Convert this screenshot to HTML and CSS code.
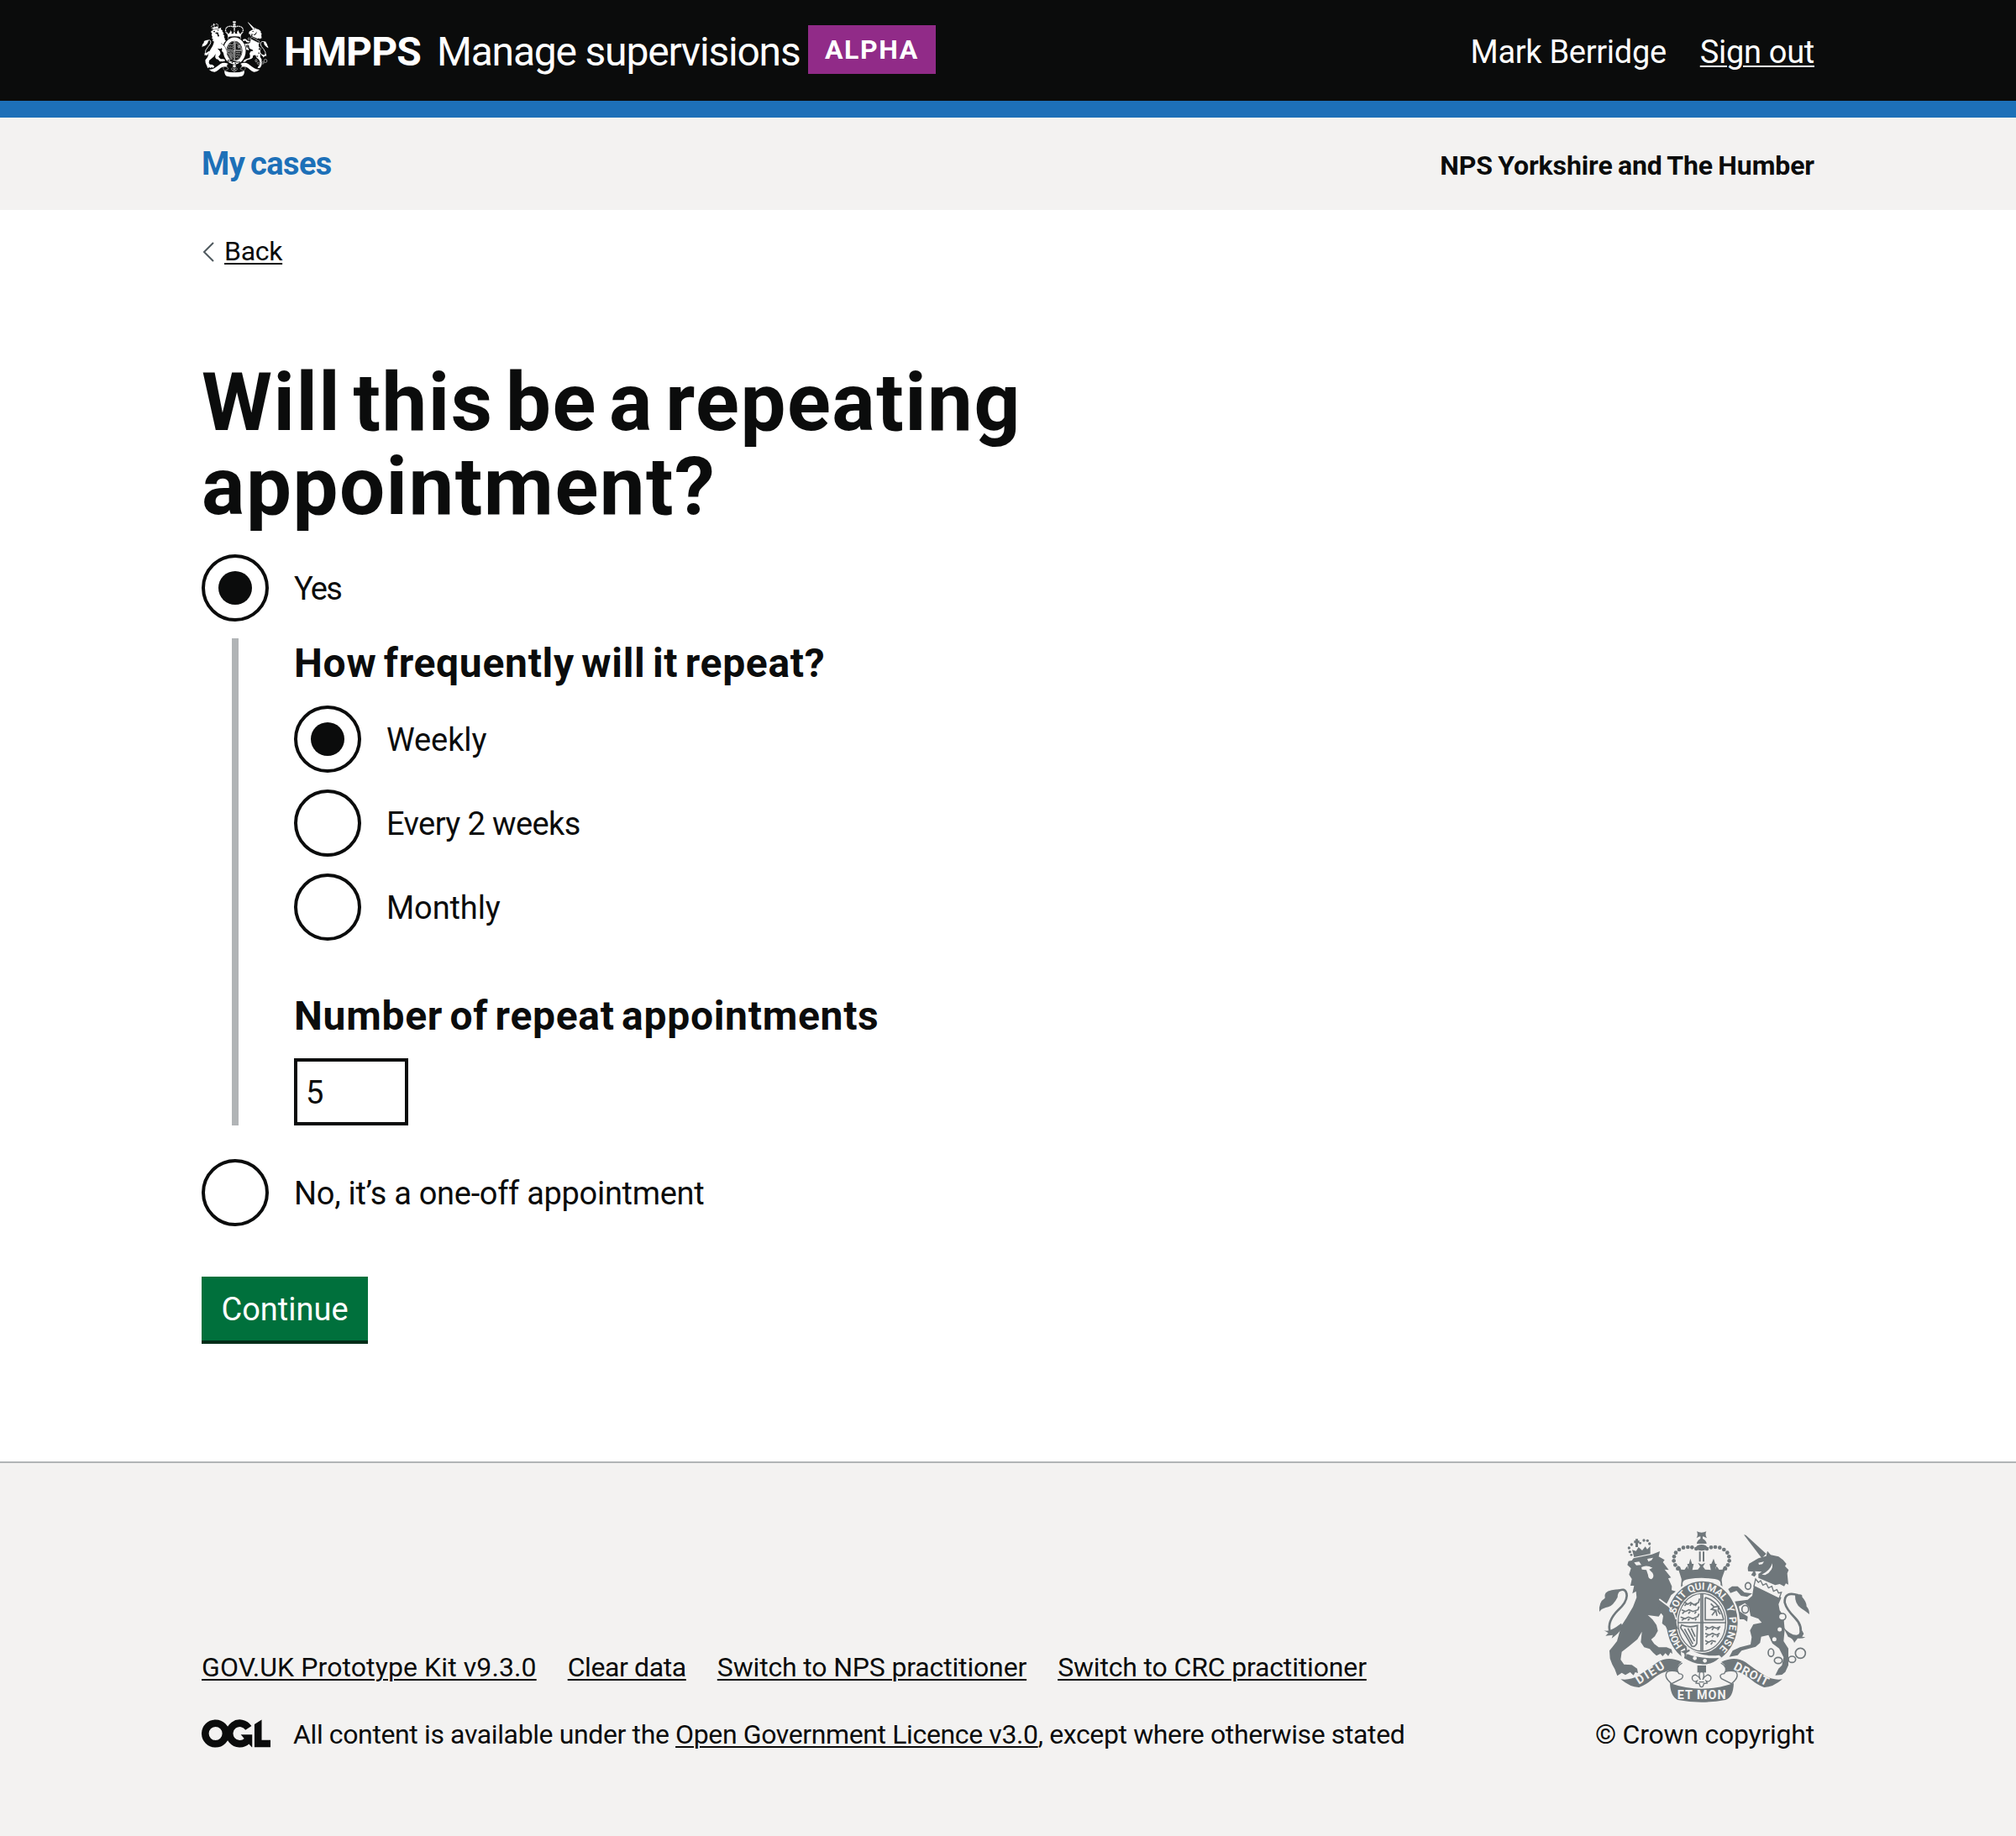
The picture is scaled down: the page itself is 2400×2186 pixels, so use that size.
FILE: index.html
```html
<!DOCTYPE html>
<html lang="en">
<head>
<meta charset="utf-8">
<title>Will this be a repeating appointment? – Manage supervisions</title>
<link rel="stylesheet" href="styles.css">
</head>
<body>
<svg class="defs" aria-hidden="true">
  <symbol id="crest" viewBox="66 60 762 624" preserveAspectRatio="none">
    <!-- lion -->
    <g class="ink">
      <path d="M189 136L196 162L254 150L254 122L243 134L236 124L225 138L212 126L203 140Z"/>
      <path d="M201 97h9v6h5v9h-5v14h-9v-14h-5v-9h5z"/>
      <circle cx="178" cy="129" r="5"/><circle cx="181" cy="143" r="5"/><circle cx="187" cy="117" r="5"/><circle cx="186" cy="154" r="4"/>
      <circle cx="218" cy="112" r="4"/><circle cx="231" cy="102" r="5"/><circle cx="244" cy="103" r="5"/><circle cx="251" cy="114" r="5"/>
      <path d="M194 166L260 152L288 141L284 160L305 172L299 180L320 208L305 206L328 235L318 238L331 266L330 280L345 284L328 298L318 318L310 332L325 345L340 370L347 396L352 418L340 412L335 424L326 412L318 424L310 410L298 400L302 386L300 366L292 362L284 374L245 369L262 385L276 404L281 425L270 445L257 456L268 472L284 484L312 484L330 491L333 508L326 502L318 515L308 505L298 516L290 507L276 514L264 503L252 490L232 484L220 466L224 428L208 455L178 480L152 500L148 528L160 545L188 547L207 560L210 576L200 573L194 584L182 573L165 583L152 575L136 586L127 562L118 545L110 524L108 496L118 484L135 462L150 408L168 380L192 340L205 306L203 284L190 292L196 264L183 264L188 240L178 224L185 202L172 190L176 176L188 174Z"/>
      <path d="M72 357Q69 322 92 308Q86 286 116 280Q138 275 150 277Q136 292 137 305Q122 334 104 340Q84 345 78 350Z"/>
      <path d="M88 423Q108 432 150 398L156 412Q140 436 116 452L120 440L94 443L104 433Z"/>
    </g>
    <path class="line" stroke-width="8" d="M128 290Q168 262 170 300Q169 324 140 350Q98 392 110 428"/>
    <path class="paper" d="M196 181L214 178L222 190L204 191ZM243 168L264 164L258 173L247 178ZM222 198Q240 188 262 200L250 206L262 218Q270 232 258 241Q246 240 246 226L240 208L224 206Z"/>
    <!-- imperial crown -->
    <g class="ink">
      <path d="M420 70Q437 78 454 70Q448 82 456 94Q444 88 441 88L441 96Q455 104 455 114L420 114Q420 104 433 96L433 88Q428 88 419 94Q426 82 420 70Z"/>
      <ellipse cx="437" cy="128" rx="20" ry="11"/>
      <path d="M428 142h6v36h-6zM441 142h6v36h-6z"/>
      <circle cx="418" cy="132" r="7"/><circle cx="403" cy="127" r="7"/><circle cx="388" cy="126" r="7"/><circle cx="372" cy="128" r="7"/><circle cx="357" cy="135" r="7"/><circle cx="345" cy="146" r="7"/><circle cx="339" cy="160" r="7"/><circle cx="338" cy="175" r="7"/><circle cx="343" cy="190" r="7"/><circle cx="352" cy="203" r="7"/>
      <circle cx="456" cy="132" r="7"/><circle cx="471" cy="127" r="7"/><circle cx="486" cy="126" r="7"/><circle cx="502" cy="128" r="7"/><circle cx="517" cy="135" r="7"/><circle cx="529" cy="146" r="7"/><circle cx="535" cy="160" r="7"/><circle cx="536" cy="175" r="7"/><circle cx="531" cy="190" r="7"/><circle cx="522" cy="203" r="7"/>
      <path d="M350 192L360 196L364 206L376 207L385 194L391 206L386 186L392 186L397 167L403 186L409 186L404 208L424 206L432 196L424 182L437 188L450 182L442 196L450 206L470 208L466 186L472 186L480 167L486 186L491 186L486 206L491 194L500 207L512 206L516 196L526 192L508 242Q437 222 366 242Z"/>
      <path d="M366 236Q437 218 508 236L512 270Q437 232 363 270Z"/>
    </g>
    <path class="paper" d="M370 264Q364 243 392 240Q437 233 484 240Q510 243 504 264Q437 230 370 264Z"/>
    <!-- unicorn -->
    <g class="ink">
      <path d="M588 82L595 83L668 150L652 166Z"/>
      <path d="M607 185L640 166L668 158L672 140L684 154L712 160L728 172L740 186L735 194L748 208L743 220L747 260L738 256L732 266L716 258L700 262L640 236L640 222L652 214L628 212L632 224L626 232L614 226L622 214L603 212L602 200Z"/>
      <path d="M624 262L722 306L712 330L716 352L730 372L732 400L734 420L730 462L747 488L747 548L736 572L724 582L700 584L712 560L724 548L730 520L714 488L690 470L676 440L650 446L646 468L630 482L580 496L566 512L536 518L548 496L574 484L612 474L616 448L610 424L622 402L652 396L640 382L612 372L606 340L592 326L570 338L574 356L602 374L600 392L588 384L572 384L556 352L546 330L556 320L602 314L618 300Z"/>
      <path d="M532 276L546 266L566 266L590 288L618 292L600 304L578 300L562 282L540 290Z"/>
      <path d="M771 297Q800 290 796 304Q812 322 812 338Q822 348 822 366Q808 354 792 344Q770 330 771 297Z"/>
      <path d="M728 410Q752 440 776 440Q790 438 796 424L802 436L796 446L808 448Q796 454 780 452L768 468Q764 452 746 446Z"/>
    </g>
    <path class="line" stroke-width="8" d="M782 298Q732 282 734 324Q740 348 770 378Q802 410 786 446"/>
    <path class="paper" d="M640 182L660 178L654 187L642 189ZM690 184Q694 212 664 226L652 224Q680 212 690 184Z"/>
    <path class="paper edge" d="M630 240L640 252L648 246L656 262L668 256L676 272L688 266L694 284L706 278L712 290L722 288L714 310L624 266Z"/>
    <g class="chain">
      <ellipse cx="603" cy="265" rx="10" ry="12"/><ellipse cx="593" cy="348" rx="12" ry="14"/><ellipse cx="725" cy="375" rx="13" ry="12"/>
      <ellipse cx="716" cy="420" rx="10" ry="10"/><ellipse cx="697" cy="455" rx="10" ry="10"/>
      <ellipse cx="685" cy="503" rx="10" ry="14"/><ellipse cx="711" cy="531" rx="14" ry="11"/><ellipse cx="760" cy="527" rx="13" ry="11"/><circle cx="790" cy="505" r="18"/>
    </g>
    <!-- garter and shield -->
    <ellipse class="paper" cx="439" cy="396" rx="134" ry="154"/>
    <ellipse class="ink" cx="439" cy="396" rx="127" ry="148"/>
    <ellipse class="paper" cx="438" cy="395" rx="91" ry="109"/>
    <ellipse class="shield" cx="438" cy="395" rx="85" ry="103"/>
    <path class="line" stroke-width="5" d="M435 292v206M441 292v206M352 396h172"/>
    <g class="charge">
      <path d="M374 322l14 8l10-6l12 8l16-8l4-14M376 336l8-8M396 336l4-8M414 336l6-8M366 350l14 6l12-6l14 6l18-6l4-12M368 364l8-8M390 364l6-8M412 364l6-8M362 376l16 6l12-6l16 6l18-8l4-10M366 388l8-6M388 388l6-6M414 388l4-6"/>
      <path d="M450 410l14 6l12-6l14 6l14-6M452 422l8-8M474 422l6-8M494 422l6-8M450 434l14 6l12-6l14 6l12-6M452 448l8-8M474 448l6-8M492 448l6-8M450 460l12 6l12-6l14 4M452 474l8-8M470 474l6-8"/>
      <path d="M450 306v80h66M450 306q52 14 66 80M470 328l12 12l-10 8l16 4l-14 18M482 340l16-2l-2 16l8 12M488 352l4 20"/>
      <path d="M366 404q30 12 56 2l-2 64q-6 14-18 10q-24-44-40-66zM376 418l30 54M388 416l24 46M400 416l14 30"/>
    </g>
    <!-- lion's foreleg over the garter -->
    <path class="arm" d="M288 310L318 336Q342 362 346 398L354 420L342 416L334 428L326 414L316 424L308 408L296 398L300 372L284 350Z"/>
    <path class="hair" stroke-width="5" d="M286 312L318 336Q340 356 346 384"/>
    <path class="paper" d="M362 496L384 482L398 492Q440 520 500 512L508 520Q480 552 436 550Q396 548 366 524Z"/>
    <path class="ink" d="M386 508Q430 526 500 522Q474 548 436 544Q406 541 378 524Z"/>
    <path class="line" stroke-width="7" d="M368 482Q384 480 382 496L372 500Q384 504 378 524M394 494L376 504"/>
    <g class="paper"><circle cx="413" cy="523" r="7"/><circle cx="449" cy="532" r="7"/></g>
    <!-- pendant -->
    <path class="ink" d="M422 549h31v25h-31z"/>
    <path class="line" stroke-width="4" d="M437 564q-14 16-4 36q-8-14-18-18q-16 4-10 18q6 10 16 4l-4 8l12 2q2 12 8 12q6 0 8-12l12-2l-4-8q10 6 16-4q6-14-10-18q-10 4-18 18q10-20-4-36M428 608h18"/>
    <!-- motto scroll -->
    <g class="ink">
      <path d="M148 598Q180 603 210 586Q250 560 280 537Q318 514 366 536Q344 552 354 572Q326 564 306 572Q284 578 262 598Q236 620 214 627Q184 628 148 598Z"/>
      <path d="M726 598Q694 603 664 586Q624 560 594 537Q556 514 508 536Q530 552 520 572Q548 564 568 572Q590 578 612 598Q638 620 660 627Q690 628 726 598Z"/>
      <path d="M324 612Q437 652 552 612Q550 664 522 672Q437 688 352 672Q326 660 324 612Z"/>
    </g>
    <path class="paper edge" d="M368 540Q340 556 356 578Q378 580 366 596L330 614Q300 590 314 572Q330 564 354 572"/>
    <path class="paper edge" d="M506 540Q534 556 518 578Q496 580 508 596L544 614Q574 590 560 572Q544 564 520 572"/>
  </symbol>
  <path id="garter-hon" d="M370 479A97 118 0 0 1 343 411"/>
  <path id="garter-soit" d="M345 366A97 118 0 0 1 390 294"/>
  <path id="garter-qui" d="M394 292A97 118 0 0 1 519 329"/>
  <path id="garter-pense" d="M525 340A97 118 0 0 1 492 495"/>
</svg>

<header class="header">
  <a class="brand" href="#">
    <svg class="brand-crest" aria-hidden="true"><use href="#crest"/></svg>
    <span class="brand-org">HMPPS</span>
    <span class="brand-service">Manage supervisions</span>
  </a>
  <strong class="tag">ALPHA</strong>
  <div class="user"><span>Mark Berridge</span><a class="link" href="#">Sign out</a></div>
</header>
<nav class="nav"><a class="nav-link" href="#">My cases</a><span class="nav-team">NPS Yorkshire and The Humber</span></nav>

<main class="main">
  <a class="back" href="#">
    <svg class="back-arrow" viewBox="0 0 14 24" aria-hidden="true"><path d="M13 1L2 12L13 23"/></svg>
    <span class="link back-text">Back</span>
  </a>
  <h1 class="title">Will this be a repeating appointment?</h1>
  <form>
    <label class="radio"><span class="dot dot-on"></span><span class="label label-yes">Yes</span></label>
    <div class="conditional">
      <h2 class="subtitle">How frequently will it repeat?</h2>
      <div class="options">
        <label class="radio"><span class="dot dot-on"></span><span class="label">Weekly</span></label>
        <label class="radio"><span class="dot"></span><span class="label label-fortnight">Every 2 weeks</span></label>
        <label class="radio"><span class="dot"></span><span class="label">Monthly</span></label>
      </div>
      <h2 class="subtitle subtitle-count">Number of repeat appointments</h2>
      <input class="count" type="text" value="5">
    </div>
    <label class="radio"><span class="dot"></span><span class="label label-no">No, it’s a one-off appointment</span></label>
    <button class="button" type="button">Continue</button>
  </form>
</main>

<footer class="footer">
  <div class="footer-main">
    <div class="footer-links">
      <a class="link kit" href="#">GOV.UK Prototype Kit v9.3.0</a>
      <a class="link clear" href="#">Clear data</a>
      <a class="link switch" href="#">Switch to NPS practitioner</a>
      <a class="link switch" href="#">Switch to CRC practitioner</a>
    </div>
    <div class="licence">
      <svg class="ogl" viewBox="0 0 483.2 195.7" role="img" aria-label="OGL"><g><circle cx="97.8" cy="97.8" r="72.5"/><path d="M329 58.500A72.500 72.500 0 1 0 319 149.500"/></g><path class="ogl-solid" d="M421.500 142.800V.1l-50.700 32.300v161.100h112.400v-50.700zM275 105.700h80v87.800h-3l-53-60.300z"/></svg>
      <span>All content is available under the <a class="link" href="#">Open Government Licence v3.0</a>, except where otherwise stated</span>
    </div>
  </div>
  <div class="copyright">
    <svg class="royal-arms" viewBox="66 60 762 624" aria-hidden="true">
      <use href="#crest" x="66" y="60" width="762" height="624"/>
      <g class="motto">
        <text><textPath href="#garter-hon" textLength="68">HON</textPath></text>
        <text><textPath href="#garter-soit" textLength="82">SOIT</textPath></text>
        <text><textPath href="#garter-qui" textLength="136">QUI MAL</textPath></text>
        <text><textPath href="#garter-pense" textLength="160">Y PENSE</textPath></text>
        <text class="motto-scroll" transform="translate(213 617) rotate(-32)" textLength="112">DIEU</text>
        <text class="motto-scroll" x="350" y="669" textLength="174">ET MON</text>
        <text class="motto-scroll" transform="translate(549 562) rotate(27)" textLength="134">DROIT</text>
      </g>
    </svg>
    <span>© Crown copyright</span>
  </div>
</footer>
</body>
</html>
```
FILE: styles.css
```css
* { box-sizing: border-box; }
body {
  margin: 0;
  background: #fff;
  color: #0b0c0c;
  font: 400 38px/40px Roboto, "Noto Sans", sans-serif;
}
a { color: inherit; text-decoration: none; }
.link {
  text-decoration: underline;
  text-decoration-thickness: 2px;
  text-underline-offset: 3px;
}
.defs { position: absolute; width: 0; height: 0; }

.ink { fill: var(--ink); }
.paper { fill: var(--paper); }
.line { fill: none; stroke: var(--ink); }
.hair { fill: none; stroke: var(--paper); }
.arm { fill: var(--ink); }
.edge { stroke: var(--ink); stroke-width: 4; }
.shield { fill: var(--paper); stroke: var(--ink); stroke-width: 4; }
.charge { fill: none; stroke: var(--ink); stroke-width: 5; }
.chain { fill: var(--paper); stroke: var(--ink); stroke-width: 5; }

.header {
  display: flex;
  align-items: center;
  height: 140px;
  padding: 0 240px;
  border-bottom: 20px solid #1d70b8;
  background: #0b0c0c;
  color: #fff;
}
.brand { display: flex; align-items: center; font-size: 48px; line-height: 60px; }
.brand-crest { --ink: #fff; --paper: #0b0c0c; width: 80px; height: 68px; margin: 0 18px 4px 0; }
.brand-org { width: 182px; padding-top: 3px; font-weight: 700; letter-spacing: -0.9px; }
.brand-service { width: 442px; padding-top: 3px; letter-spacing: -1.2px; white-space: nowrap; }
.tag {
  width: 152px;
  height: 58px;
  margin-bottom: 2px;
  padding-left: 20px;
  background: #912b88;
  font-size: 32px;
  line-height: 58px;
  letter-spacing: 1.6px;
}
.user { display: flex; gap: 40px; margin-left: auto; padding-top: 3px; letter-spacing: -0.3px; }

.nav {
  display: flex;
  align-items: center;
  justify-content: space-between;
  height: 110px;
  padding: 0 240px;
  background: #f3f2f1;
  font-weight: 700;
}
.nav-link { color: #1d70b8; letter-spacing: -0.6px; word-spacing: -2px; }
.nav-team { padding-top: 4px; font-size: 32px; letter-spacing: -0.1px; word-spacing: -1.5px; }

.main { padding: 29px 240px 140px; }
.back { display: flex; align-items: center; width: max-content; font-size: 32px; }
.back-arrow { width: 14px; height: 24px; margin: 2px 12px 0 1px; fill: none; stroke: #505a5f; stroke-width: 2; }
.back-text { letter-spacing: -0.3px; }
.title {
  width: 1060px;
  margin: 110px 0 31px;
  font-size: 96px;
  line-height: 100px;
  letter-spacing: 1.5px;
  word-spacing: -11px;
}
.radio { display: flex; align-items: center; gap: 30px; height: 80px; }
.dot { flex: none; width: 80px; height: 80px; border: 4px solid #0b0c0c; border-radius: 50%; }
.dot-on { display: grid; place-items: center; }
.dot-on::after { content: ""; width: 40px; height: 40px; border-radius: 50%; background: #0b0c0c; }
.label { padding-top: 2px; letter-spacing: -0.1px; }
.label-yes { letter-spacing: -1.8px; }
.label-fortnight { letter-spacing: -0.6px; }
.label-no { letter-spacing: -0.3px; }
.conditional { margin: 20px 0 40px 36px; padding-left: 66px; border-left: 8px solid #b1b4b6; }
.subtitle { margin: 0 0 20px; font-size: 48px; line-height: 60px; letter-spacing: 0.7px; word-spacing: -4.2px; }
.subtitle-count { margin-top: 60px; }
.options { display: grid; gap: 20px; }
.count {
  display: block;
  width: 136px;
  height: 80px;
  padding: 2px 10px 0;
  border: 4px solid #0b0c0c;
  border-radius: 0;
  background: #fff;
  color: #0b0c0c;
  font: inherit;
}
.button {
  display: block;
  width: 198px;
  height: 80px;
  margin-top: 60px;
  padding: 2px 0 0;
  border: 0;
  border-bottom: 4px solid #002d18;
  background: #00703c;
  color: #fff;
  font: inherit;
}

.footer {
  display: flex;
  align-items: flex-end;
  justify-content: space-between;
  height: 446px;
  padding: 0 240px 101px;
  border-top: 2px solid #b1b4b6;
  background: #f3f2f1;
  font-size: 32px;
}
.footer-main { display: grid; gap: 40px; }
.footer-links { display: flex; gap: 37px; }
.kit { letter-spacing: 0.1px; }
.clear { letter-spacing: -0.4px; }
.switch { letter-spacing: -0.16px; }
.licence { display: flex; align-items: center; gap: 27px; letter-spacing: -0.38px; }
.ogl { width: 82px; height: 34px; margin-bottom: 3px; fill: none; stroke: #0b0c0c; stroke-width: 50.700; }
.ogl-solid { fill: #0b0c0c; stroke: none; }
.copyright { display: grid; gap: 17px; width: 261px; letter-spacing: -0.24px; white-space: nowrap; }
.royal-arms { --ink: #6f777b; --paper: #f3f2f1; width: 254px; height: 208px; margin-left: 3px; }
.motto { fill: #f3f2f1; font-size: 36px; font-weight: 700; letter-spacing: 0; }
.motto-scroll { font-size: 43px; }
```
